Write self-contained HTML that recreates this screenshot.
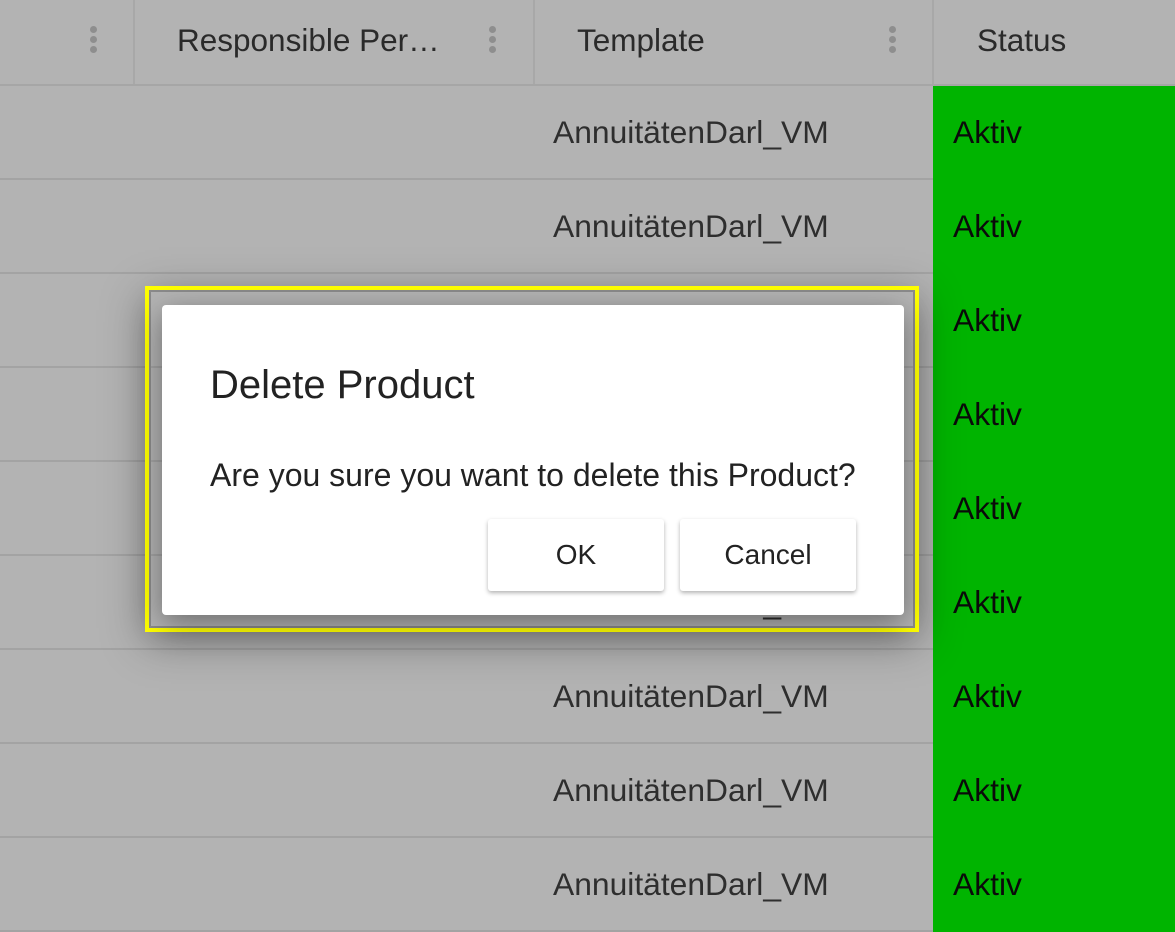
<!DOCTYPE html><html><head><style>
body{margin:0;width:1175px;height:925px;overflow:hidden;background:#b3b3b3;font-family:"Liberation Sans",sans-serif;position:relative;color:#2a2a2a}
.h{position:absolute;top:0;height:84px;border-bottom:2px solid #a6a6a6;width:1175px}
.vs{position:absolute;top:0;width:2px;height:84px;background:#a8a8a8}
.ht{position:absolute;top:22px;font-size:31.5px;color:#2a2a2a}
.dots{position:absolute;top:26px;width:7px}
.dots i{display:block;width:7px;height:7px;border-radius:50%;background:#8e8e8e;margin-bottom:3px}
.row{position:absolute;left:0;width:1175px;height:92px;border-bottom:2px solid #a3a3a3}
.row .t{position:absolute;left:553px;top:28px;font-size:31.8px;color:#2e2e2e}
.row .g{position:absolute;left:933px;top:0;width:242px;height:94px;background:#00b400}
.row .g span{position:absolute;left:20px;top:28px;font-size:31.8px;color:#0a0a0a}
.y{position:absolute;left:145px;top:286px;width:766px;height:338px;border:4px solid #ffff00;box-shadow:inset 0 0 0 2px #8a8a8a,0 10px 40px rgba(0,0,0,.35)}
.d{position:absolute;left:162px;top:305px;width:742px;height:310px;background:#fff;border-radius:4px;box-shadow:0 8px 30px rgba(0,0,0,.4)}
.d h1{position:absolute;left:48px;top:58px;margin:0;font-weight:normal;font-size:40px;color:#222}
.d p{position:absolute;left:48px;top:152px;margin:0;font-size:32px;color:#222}
.b{position:absolute;top:214px;width:176px;height:72px;background:#fff;border-radius:3px;box-shadow:0 2px 4px rgba(0,0,0,.3);font-size:28px;text-align:center;line-height:72px;color:#222}
</style></head><body>
<div class="h"></div>
<div class="vs" style="left:133px"></div><div class="vs" style="left:533px"></div><div class="vs" style="left:932px"></div>
<div class="dots" style="left:90px"><i></i><i></i><i></i></div>
<div class="dots" style="left:489px"><i></i><i></i><i></i></div>
<div class="dots" style="left:889px"><i></i><i></i><i></i></div>
<div class="ht" style="left:177px">Responsible Per…</div>
<div class="ht" style="left:577px">Template</div>
<div class="ht" style="left:977px">Status</div>
<div class="row" style="top:86px"><div class="t">AnnuitätenDarl_VM</div><div class="g"><span>Aktiv</span></div></div>
<div class="row" style="top:180px"><div class="t">AnnuitätenDarl_VM</div><div class="g"><span>Aktiv</span></div></div>
<div class="row" style="top:274px"><div class="g"><span>Aktiv</span></div></div>
<div class="row" style="top:368px"><div class="g"><span>Aktiv</span></div></div>
<div class="row" style="top:462px"><div class="g"><span>Aktiv</span></div></div>
<div class="row" style="top:556px"><div class="t">AnnuitätenDarl_VM</div><div class="g"><span>Aktiv</span></div></div>
<div class="row" style="top:650px"><div class="t">AnnuitätenDarl_VM</div><div class="g"><span>Aktiv</span></div></div>
<div class="row" style="top:744px"><div class="t">AnnuitätenDarl_VM</div><div class="g"><span>Aktiv</span></div></div>
<div class="row" style="top:838px"><div class="t">AnnuitätenDarl_VM</div><div class="g"><span>Aktiv</span></div></div>
<div class="y"></div>
<div class="d"><h1>Delete Product</h1><p>Are you sure you want to delete this Product?</p>
<div class="b" style="left:326px">OK</div><div class="b" style="left:518px">Cancel</div></div>
</body></html>
